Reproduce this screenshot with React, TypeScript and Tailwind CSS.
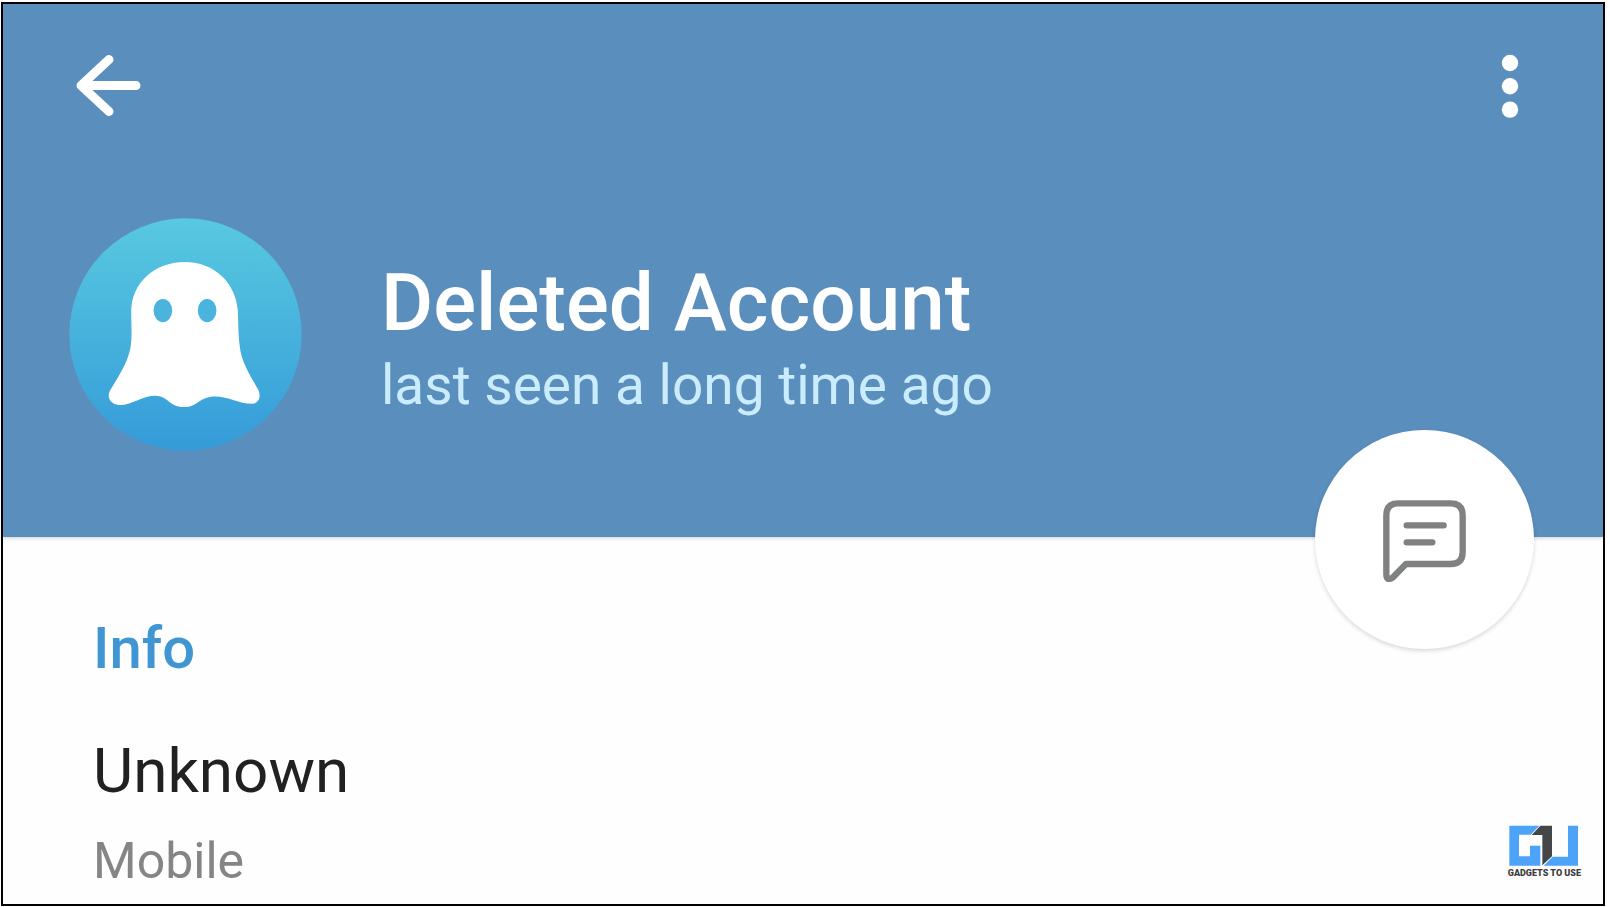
const profile = {
  name: "Deleted Account",
  status: "last seen a long time ago",
  phone: "Unknown",
  phoneType: "Mobile",
};

function BackIcon() {
  return (
    <svg width="68" height="68" viewBox="0 0 68 68" fill="none" aria-hidden="true">
      <path
        d="M62 33.500H9M35 7.500L7 33.500L35 59.500"
        stroke="white"
        strokeWidth="9"
        strokeLinecap="round"
        strokeLinejoin="round"
      />
    </svg>
  );
}

function MoreIcon() {
  return (
    <svg width="20" height="68" viewBox="0 0 20 68" fill="white" aria-hidden="true">
      <circle cx="10" cy="11" r="8.2" />
      <circle cx="10" cy="34.300" r="8.2" />
      <circle cx="10" cy="57.600" r="8.2" />
    </svg>
  );
}

function GhostAvatar() {
  return (
    <svg
      className="size-[233px] shrink-0"
      viewBox="28 54 700 700"
      role="img"
      aria-label="Ghost"
    >
      <defs>
        <linearGradient id="avatar" x1="0" y1="0" x2="0" y2="1">
          <stop offset="0" stopColor="#58c9e0" />
          <stop offset="1" stopColor="#359bd9" />
        </linearGradient>
      </defs>
      <circle cx="378" cy="404" r="349" fill="url(#avatar)" />
      <path
        d="M376 186C284 186 215 250 215 335C215 370 217 390 215 425C212 476 184 518 151 573C139 596 157 616 181 616C215 616 245 590 284 588C325 586 328 622 372 622C416 622 420 590 466 590C508 590 540 612 577 612C598 612 606 592 597 571C574 529 546 488 541 440C536 400 537 370 535 330C528 248 464 186 376 186Z"
        fill="white"
      />
      <ellipse cx="310" cy="332" rx="28" ry="35" fill="#4ab3de" />
      <ellipse cx="443" cy="332" rx="28" ry="35" fill="#4ab3de" />
    </svg>
  );
}

function MessageIcon() {
  return (
    <svg
      width="84"
      height="84"
      viewBox="277 266 252 252"
      fill="none"
      stroke="#7f8182"
      strokeWidth="19"
      strokeLinecap="round"
      strokeLinejoin="round"
      aria-hidden="true"
    >
      <path d="M287 318Q287 282 322 282H480Q516 282 516 318V428Q516 464 480 464H346L307 504Q287 518 287 494Z" />
      <path d="M348 348H459M348 399H425" />
    </svg>
  );
}

function Watermark() {
  return (
    <div className="absolute right-[22px] bottom-[25px] flex flex-col items-center">
      <svg width="70" height="42" viewBox="87 76 210 126" aria-hidden="true">
        <path
          d="M88 78H178L152 105H117V170H150V138H181V198H88Z"
          fill="#4ca3f7"
        />
        <path d="M181 78H216V170L187 197V106H155Z" fill="#444648" />
        <path d="M264 78H294V198H191L218 171H264Z" fill="#4ca3f7" />
      </svg>
      <span className="text-[9px] leading-3 font-black text-[#3b3b3b]">
        GADGETS TO USE
      </span>
    </div>
  );
}

export default function App() {
  return (
    <div className="flex min-h-screen bg-white pt-0.5 pr-[5px] pb-px pl-px font-['Roboto',sans-serif]">
      <main className="relative flex flex-1 flex-col border-2 border-black bg-[#fefefe]">
        <header className="relative bg-[#5a8ebc] pt-12 pb-[86px] shadow-[0_1px_4px_rgba(0,0,0,0.2)]">
          <div className="flex items-center justify-between pr-[83px] pl-[71px]">
            <button type="button" aria-label="Back">
              <BackIcon />
            </button>
            <button type="button" aria-label="More options">
              <MoreIcon />
            </button>
          </div>

          <div className="mt-[98px] flex items-start gap-[79px] pl-[66px]">
            <GhostAvatar />
            <div className="pt-[45px]">
              <h1 className="text-[80px] leading-[80px] font-medium text-white">
                {profile.name}
              </h1>
              <p className="text-[55px] leading-[84px] text-[#c9ecff]">
                {profile.status}
              </p>
            </div>
          </div>

          <button
            type="button"
            aria-label="Send message"
            className="absolute right-[69px] -bottom-[112px] flex size-[219px] items-center justify-center rounded-full bg-white shadow-[0_2px_4px_rgba(0,0,0,0.15)]"
          >
            <MessageIcon />
          </button>
        </header>

        <section className="px-[90px] pt-[79px] pb-2.5">
          <h2 className="text-[58px] leading-[64px] font-medium text-[#4096d2]">
            Info
          </h2>
          <dl className="mt-[55px] flex flex-col-reverse gap-[22px]">
            <dt className="text-[50px] leading-[64px] text-[#858585]">
              {profile.phoneType}
            </dt>
            <dd className="text-[62px] leading-[72px] text-[#212121]">
              {profile.phone}
            </dd>
          </dl>
        </section>

        <Watermark />
      </main>
    </div>
  );
}
